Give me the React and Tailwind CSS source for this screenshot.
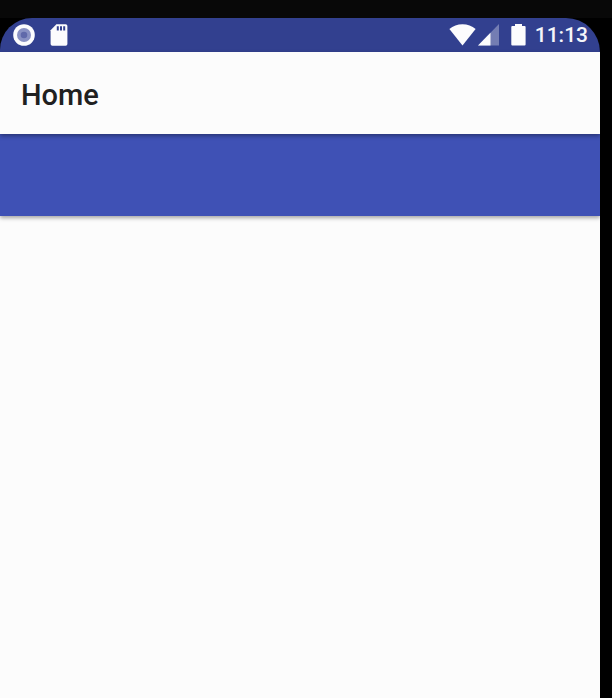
function RecordIcon() {
  return (
    <svg className="h-[22px] w-[22px]" viewBox="0 0 22 22" aria-hidden="true">
      <circle cx="11" cy="11" r="10.8" fill="#fcfcfd" />
      <circle cx="11" cy="11" r="7" fill="#8991c3" />
      <circle cx="11" cy="11" r="3.3" fill="#6069aa" />
    </svg>
  );
}

function SdCardIcon() {
  return (
    <svg className="h-[22px] w-[18px]" viewBox="0 0 18 22" aria-hidden="true">
      <path d="M6.4 0.2H15.6Q17.4 0.2 17.4 2V20Q17.4 21.8 15.6 21.8H2.4Q0.6 21.8 0.6 20V6.2Z" fill="#fcfcfd" />
      <path d="M6.8 2.2h2v4.4h-2zM10 2.2h2v4.4h-2zM13.2 2.2h2v4.4h-2z" fill="#32408f" />
    </svg>
  );
}

function WifiIcon() {
  return (
    <svg className="h-[22px] w-[27px]" viewBox="0 0 27 22" aria-hidden="true">
      <path d="M0.4 5C4 1.8 8.5 0.2 13.5 0.2S23 1.8 26.6 5L13.5 21.4Z" fill="#fcfcfd" />
    </svg>
  );
}

function SignalIcon() {
  return (
    <svg className="h-[22px] w-[21px]" viewBox="0 0 21 22" aria-hidden="true">
      <path d="M0 21.5L21 0V21.5Z" fill="#747db3" />
      <path d="M0 21.5L12.5 8.7V21.5Z" fill="#fcfcfd" />
    </svg>
  );
}

function BatteryIcon() {
  return (
    <svg className="h-[22px] w-[15px]" viewBox="0 0 15 22" aria-hidden="true">
      <path d="M4 0H11V2H13.6Q14.6 2 14.6 3V20.5Q14.6 21.5 13.6 21.5H1.3Q0.3 21.5 0.3 20.5V3Q0.3 2 1.3 2H4Z" fill="#fcfcfd" />
    </svg>
  );
}

export default function App() {
  return (
    <div className="flex min-h-screen flex-col bg-black font-[Roboto,sans-serif]">
      <div className="h-[18px] bg-[#080808]" />
      <div className="mr-3 flex grow flex-col overflow-hidden">
        <div className="flex h-[34px] items-center justify-between rounded-tl-[32px] rounded-tr-[34px] bg-[#32408f] pr-3 pl-[13px]">
          <div className="flex items-center gap-[15px]">
            <RecordIcon />
            <SdCardIcon />
          </div>
          <div className="flex items-center">
            <WifiIcon />
            <span className="ml-0.5 flex">
              <SignalIcon />
            </span>
            <span className="ml-3 flex">
              <BatteryIcon />
            </span>
            <time className="ml-[9px] text-[21px] leading-[34px] font-medium text-[#f5f5fa]">11:13</time>
          </div>
        </div>
        <header className="z-10 flex h-[82px] items-center bg-[#fcfcfc] px-[21px] pt-1 shadow-[0_2px_4px_rgba(0,0,0,0.35)]">
          <h1 className="text-[29px] leading-9 font-medium text-[#202020]">Home</h1>
        </header>
        <div className="z-0 h-[82px] bg-[#3f51b5] shadow-[0_2px_4px_rgba(0,0,0,0.35)]" />
        <main className="grow bg-[#fcfcfc]" />
      </div>
    </div>
  );
}
